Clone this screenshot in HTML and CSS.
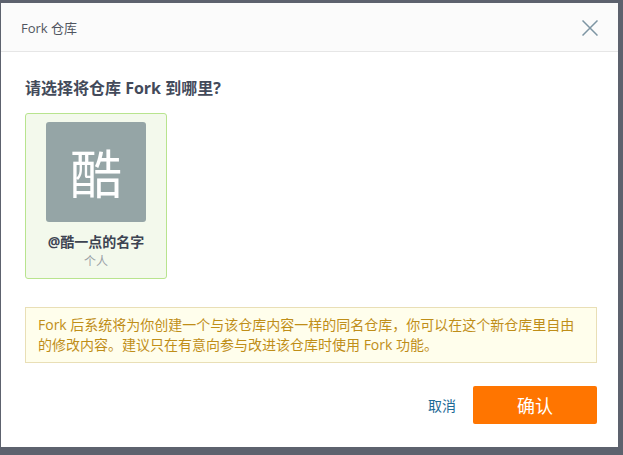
FILE: index.html
```html
<!DOCTYPE html>
<html lang="zh">
<head>
<meta charset="utf-8">
<link rel="stylesheet" href="styles.css">
</head>
<body>
<div class="dialog">
  <div class="header">
    <span class="title">Fork 仓库</span>
    <svg class="close" width="16" height="16" viewBox="0 0 16 16"><path d="M0.5 0.5L15.5 15.5M15.5 0.5L0.5 15.5" stroke="#7d95a3" stroke-width="1.5" fill="none"/></svg>
  </div>
  <div class="body">
    <h2 class="question">请选择将仓库 Fork 到哪里?</h2>
    <div class="card">
      <div class="avatar">酷</div>
      <div class="name">@酷一点的名字</div>
      <div class="kind">个人</div>
    </div>
    <div class="notice">Fork 后系统将为你创建一个与该仓库内容一样的同名仓库，你可以在这个新仓库里自由的修改内容。建议只在有意向参与改进该仓库时使用 Fork 功能。</div>
  </div>
  <div class="footer">
    <a class="cancel">取消</a>
    <button class="confirm">确认</button>
  </div>
</div>
</body>
</html>
```

FILE: styles.css
```css
html, body { margin: 0; padding: 0; }
body {
  background: #5d626e;
  padding: 3px 5px 8px 1px;
  font-family: "Open Sans", "Noto Sans CJK SC", sans-serif;
  box-sizing: border-box;
  height: 455px;
}
.dialog {
  background: #fff;
  height: 444px;
  display: flex;
  flex-direction: column;
}
.header {
  height: 48px;
  border-bottom: 1px solid #e6e6e6;
  background: #fbfbfb;
  display: flex;
  align-items: center;
  justify-content: space-between;
  padding: 0 20px 0 20px;
}
.title { font-size: 13px; color: #505560; }
.close { display: block; margin-top: 1px; }
.body { padding: 24px 21px 0 24px; }
.question {
  margin: 0;
  font-size: 16px;
  font-weight: 700;
  color: #434a5a;
  line-height: 24px;
}
.card {
  margin-top: 13px;
  width: 140px;
  height: 164px;
  background: #f3f9ec;
  border: 1px solid #b8e48e;
  border-radius: 3px;
  display: flex;
  flex-direction: column;
  align-items: center;
}
.avatar {
  margin-top: 8px;
  width: 100px;
  height: 100px;
  border-radius: 3px;
  background: #95a5a6;
  color: #fff;
  font-size: 52px;
  line-height: 100px;
  text-align: center;
  font-family: "Noto Sans CJK SC", sans-serif;
}
.name {
  margin-top: 10px;
  font-size: 14px;
  font-weight: 700;
  color: #3d4452;
  line-height: 20px;
}
.kind { font-size: 12px; color: #9aa0a6; line-height: 18px; margin-top: 1px; }
.notice {
  margin-top: 28px;
  background: #fffeec;
  border: 1px solid #e9dfb6;
  padding: 7px 11px 7px 12px;
  font-size: 14px;
  line-height: 20px;
  color: #bf8e18;
}
.footer {
  margin-top: auto;
  padding: 0 21px 23px 0;
  display: flex;
  justify-content: flex-end;
  align-items: center;
  gap: 17px;
}
.cancel { font-size: 14px; color: #1d6b96; }
.confirm {
  width: 124px;
  height: 38px;
  border: none;
  border-radius: 2px;
  background: #ff7500;
  color: #fff;
  font-size: 18px;
  font-family: "Noto Sans CJK SC", sans-serif;
}
```
